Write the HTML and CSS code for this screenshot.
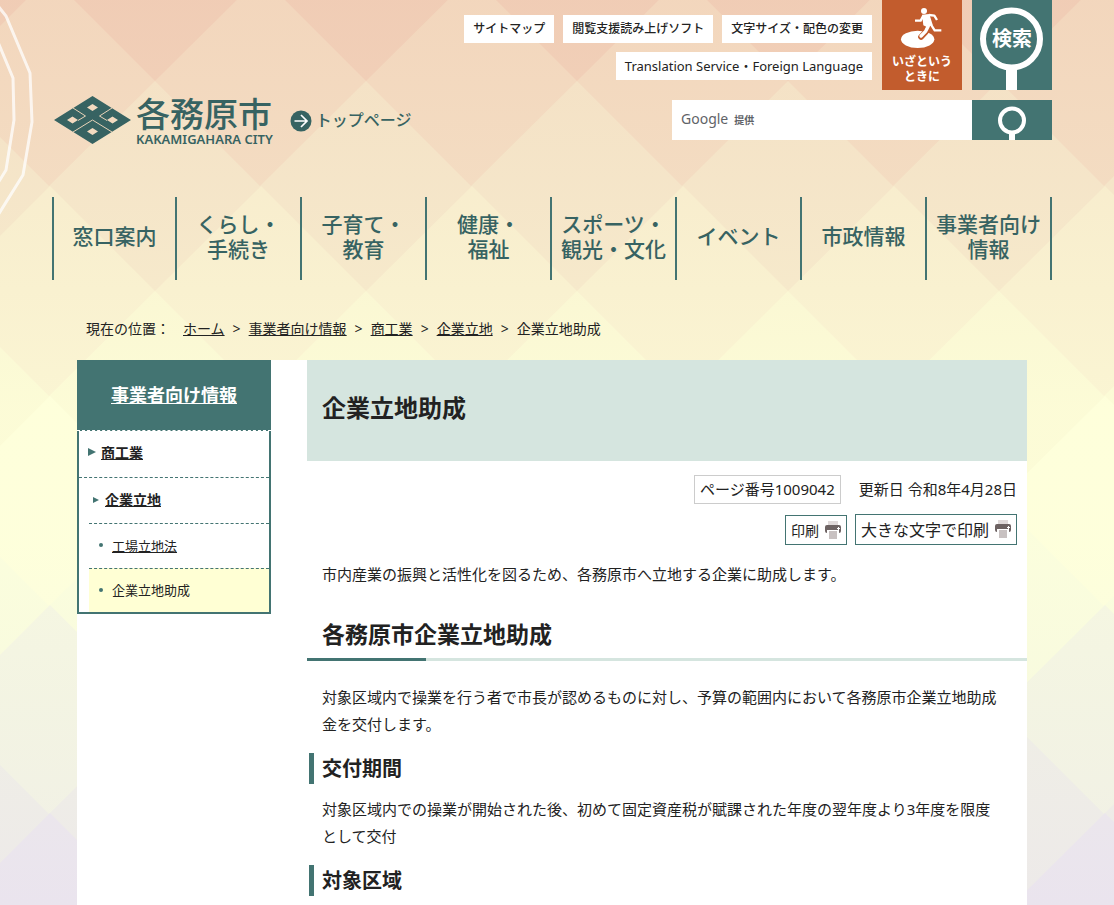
FILE: index.html
```html
<!DOCTYPE html>
<html lang="ja">
<head>
    <meta charset="UTF-8">
    <meta name="viewport" content="width=device-width, initial-scale=1.0">
    <title>企業立地助成｜各務原市公式ウェブサイト</title>
    <link rel="stylesheet" href="styles.css">
</head>
<body>
    <svg class="bg" aria-hidden="true">
        <defs>
            <path id="zigzag" d="M-161 106l106-106 105 105 106-105 105 105 106-105 105 105 106-105 105 105 106-105 105 105 106-105 105 105 106-105 105 105 106-105 105 105 106-105 105 105 106-105 105 105V1200H-161z"/>
            <linearGradient id="fade" gradientUnits="userSpaceOnUse" x1="0" y1="0" x2="0" y2="905">
                <stop offset="0" stop-color="#f1d0b8"/>
                <stop offset="0.2" stop-color="#f5e3c8"/>
                <stop offset="0.32" stop-color="#f9f1d0"/>
                <stop offset="0.45" stop-color="#feffda"/>
                <stop offset="0.6" stop-color="#fdffdc"/>
                <stop offset="0.8" stop-color="#f2f2e3"/>
                <stop offset="1" stop-color="#eae4ee"/>
            </linearGradient>
        </defs>
        <use href="#zigzag" x="105" y="-24" fill="#f3d9bf"/>
        <use href="#zigzag" x="-1" y="81" fill="#f5e6c9"/>
        <use href="#zigzag" x="105" y="186" fill="#f9f1d0"/>
        <use href="#zigzag" x="-1" y="291" fill="#fbfad5"/>
        <use href="#zigzag" x="105" y="396" fill="#feffdb"/>
        <use href="#zigzag" x="-1" y="501" fill="#fafddd"/>
        <use href="#zigzag" x="105" y="605" fill="#f3f4e3"/>
        <use href="#zigzag" x="-1" y="709" fill="#eeece7"/>
        <use href="#zigzag" x="105" y="813" fill="#eae4ee"/>
        <rect width="100%" height="100%" fill="url(#fade)" opacity="0.3"/>
        <g class="bg-line">
            <path d="M-2 6l8 10 24 57 2 49-9 53-25 40"/>
            <path d="M-2 42l15 36 1 42-8 50-8 13"/>
        </g>
    </svg>

    <div class="page">
        <header class="header">
            <div class="brand">
                <a class="logo" href="#">
                    <svg class="logo-mark" width="77" height="48" viewBox="0 0 77 48" aria-hidden="true">
                        <path fill="#376362" fill-rule="evenodd" d="M38.500 0L77 24 38.500 48 0 24zM38.500 8l-5.500 3.500 5.500 3.500 5.500-3.500zM18.500 20.500l-5.500 3.500 5.500 3.500 5.500-3.500zM58.500 20.500l-5.500 3.500 5.500 3.500 5.500-3.500zM38.500 32l-5.500 3.500 5.500 3.500 5.500-3.500z"/>
                        <path class="logo-line" d="M19 12l12.500 8-7.500 4.500M58 12l-12.500 8 7.500 4.500M19 36l19.500-12 19.500 12"/>
                    </svg>
                    <span class="logo-text">
                        <span class="logo-name">各務原市</span>
                        <span class="logo-roman">KAKAMIGAHARA CITY</span>
                    </span>
                </a>
                <a class="to-top" href="#">
                    <svg width="22" height="22" viewBox="0 0 22 22" aria-hidden="true">
                        <circle cx="11" cy="11" r="10.500" fill="#376362"/>
                        <path d="M4.500 11h12.500M11 5l6 6-6 6" fill="none" stroke="#fff" stroke-width="1.700"/>
                    </svg>
                    トップページ
                </a>
            </div>

            <div class="tools">
                <div class="tools-top">
                    <ul class="sub-links">
                        <li><a href="#">サイトマップ</a></li>
                        <li><a href="#">閲覧支援読み上げソフト</a></li>
                        <li><a href="#">文字サイズ・配色の変更</a></li>
                        <li class="lang"><a href="#">Translation Service・Foreign Language</a></li>
                    </ul>
                    <a class="tile tile-emergency" href="#">
                        <svg width="80" height="50" viewBox="0 0 240 150" aria-hidden="true">
                            <ellipse cx="107" cy="118" rx="50" ry="26" fill="#fff"/>
                            <path d="M139 80l-8 16-14 15" fill="none" stroke="#c25c2d" stroke-width="17" stroke-linecap="round"/>
                            <circle cx="126" cy="33" r="9" fill="#fff"/>
                            <path d="M120 44l22-2 10 32-16 8-12-6z" fill="#fff"/>
                            <path d="M124 47l-8 15h-17M141 45l16 2 8 13M147 74l11 17h20M139 76l-8 17-14 16" fill="none" stroke="#fff" stroke-width="7" stroke-linejoin="round"/>
                            <path d="M139 78l-8 16-14 14" fill="none" stroke="#fff" stroke-width="10" stroke-linecap="round"/>
                        </svg>
                        <span>いざという<br>ときに</span>
                    </a>
                    <a class="tile tile-search" href="#">
                        <svg class="lens" viewBox="0 0 80 90" aria-hidden="true">
                            <circle cx="39.500" cy="39" r="28.500" fill="none" stroke="#fff" stroke-width="6"/>
                            <path d="M34 68h11v22H34z" fill="#fff"/>
                        </svg>
                        <span>検索</span>
                    </a>
                </div>
                <form class="search">
                    <label for="q"><span class="google">Google</span> <span class="offer">提供</span></label>
                    <input type="text" id="q" name="q">
                    <button type="submit" aria-label="検索">
                        <svg width="80" height="40" viewBox="0 0 80 40" aria-hidden="true">
                            <circle cx="40" cy="20.500" r="12" fill="none" stroke="#fff" stroke-width="4"/>
                            <path d="M37 32h6v8h-6z" fill="#fff"/>
                        </svg>
                    </button>
                </form>
            </div>
        </header>

        <nav class="gnav">
            <a href="#">窓口案内</a>
            <a href="#">くらし・<br>手続き</a>
            <a href="#">子育て・<br>教育</a>
            <a href="#">健康・<br>福祉</a>
            <a href="#">スポーツ・<br>観光・文化</a>
            <a href="#">イベント</a>
            <a href="#">市政情報</a>
            <a href="#">事業者向け<br>情報</a>
        </nav>

        <div class="breadcrumb">
            <span class="here">現在の位置：</span>
            <a href="#">ホーム</a> <span>&gt;</span>
            <a href="#">事業者向け情報</a> <span>&gt;</span>
            <a href="#">商工業</a> <span>&gt;</span>
            <a href="#">企業立地</a> <span>&gt;</span>
            <span>企業立地助成</span>
        </div>

        <div class="main">
            <aside class="side">
                <h2 class="side-title"><a href="#">事業者向け情報</a></h2>
                <ul class="side-menu">
                    <li class="lv1"><a href="#">商工業</a></li>
                    <li class="lv2"><a href="#">企業立地</a></li>
                    <li class="lv3"><a href="#">工場立地法</a></li>
                    <li class="lv3 current">企業立地助成</li>
                </ul>
            </aside>

            <article class="content">
                <h1>企業立地助成</h1>
                <div class="meta">
                    <span class="page-id">ページ番号1009042</span>
                    <span>更新日 令和8年4月28日</span>
                </div>
                <div class="print">
                    <button type="button">印刷
                        <svg width="16" height="18" viewBox="0 0 16 18" aria-hidden="true">
                            <path d="M3 0h10v4H3z" fill="#e0dada"/>
                            <path d="M2 4h12a2 2 0 0 1 2 2v4a2 2 0 0 1-2 2V9H2v3a2 2 0 0 1-2-2V6a2 2 0 0 1 2-2z" fill="#6d6363"/>
                            <path d="M4 10h8v8H4z" fill="#c8c1c1"/>
                            <path d="M12 7.500h3M13.500 6v3" stroke="#fff"/>
                        </svg>
                    </button>
                    <button type="button" class="large">大きな文字で印刷
                        <svg width="16" height="18" viewBox="0 0 16 18" aria-hidden="true">
                            <path d="M3 0h10v4H3z" fill="#e0dada"/>
                            <path d="M2 4h12a2 2 0 0 1 2 2v4a2 2 0 0 1-2 2V9H2v3a2 2 0 0 1-2-2V6a2 2 0 0 1 2-2z" fill="#6d6363"/>
                            <path d="M4 10h8v8H4z" fill="#c8c1c1"/>
                            <path d="M12 7.500h3M13.500 6v3" stroke="#fff"/>
                        </svg>
                    </button>
                </div>
                <p>市内産業の振興と活性化を図るため、各務原市へ立地する企業に助成します。</p>
                <h2>各務原市企業立地助成</h2>
                <p>対象区域内で操業を行う者で市長が認めるものに対し、予算の範囲内において各務原市企業立地助成金を交付します。</p>
                <h3>交付期間</h3>
                <p>対象区域内での操業が開始された後、初めて固定資産税が賦課された年度の翌年度より3年度を限度として交付</p>
                <h3>対象区域</h3>
            </article>
        </div>
    </div>
</body>
</html>
```
FILE: styles.css
```css
* {
    box-sizing: border-box;
}

body {
    margin: 0;
    position: relative;
    background: #f0cbb4;
    font-family: "Noto Sans", "Noto Sans CJK JP", sans-serif;
    font-size: 15px;
    line-height: 27px;
    color: #222;
}

a {
    color: inherit;
}

ul {
    margin: 0;
    padding: 0;
    list-style: none;
}

.bg {
    position: absolute;
    top: 0;
    left: 0;
    width: 100%;
    height: 100%;
}

.bg-line {
    fill: none;
    stroke: #fff;
    stroke-width: 3;
    opacity: 0.75;
}

.page {
    position: relative;
    display: flex;
    flex-direction: column;
    min-height: 100vh;
    padding-right: 10px;
}

/* header */
.header {
    display: flex;
    justify-content: space-between;
    width: 100%;
    max-width: 1000px;
    min-height: 197px;
    margin: 0 auto;
}

.brand {
    display: flex;
    align-items: flex-start;
    gap: 17px;
    padding: 96px 0 0 2px;
    color: #376362;
}

.logo {
    display: flex;
    gap: 5px;
    text-decoration: none;
}

.logo-line {
    fill: none;
    stroke: #e8d3b8;
    stroke-width: 1;
}

.logo-text {
    display: flex;
    flex-direction: column;
}

.logo-name {
    font-size: 34px;
    font-weight: 500;
    line-height: 36px;
}

.logo-roman {
    font-size: 13px;
    font-weight: 600;
    line-height: 14px;
}

.to-top {
    display: flex;
    align-items: center;
    gap: 4px;
    padding-top: 11px;
    font-size: 16px;
    font-weight: 500;
    text-decoration: none;
}

.tools-top {
    display: flex;
    gap: 10px;
    margin-bottom: 10px;
}

.sub-links {
    display: flex;
    flex-wrap: wrap;
    justify-content: flex-end;
    align-content: flex-start;
    gap: 9px;
    width: 410px;
    padding-top: 15px;
}

.sub-links a {
    display: block;
    padding: 0 9px;
    background: #fff;
    font-size: 12px;
    font-weight: 500;
    line-height: 28px;
    text-decoration: none;
}

.sub-links .lang a {
    font-size: 13px;
    font-weight: 400;
}

.tile {
    position: relative;
    width: 80px;
    height: 90px;
    color: #fff;
    font-weight: 700;
    text-align: center;
    text-decoration: none;
}

.tile svg {
    display: block;
}

.tile-emergency {
    background: #c25c2d;
    font-size: 12px;
    line-height: 15px;
}

.tile-emergency span {
    display: block;
    padding-top: 4px;
}

.tile-search {
    background: #437472;
    font-size: 20px;
    line-height: 78px;
}

.tile-search .lens {
    position: absolute;
    inset: 0;
}

.search {
    display: flex;
    width: 380px;
    height: 40px;
    margin-left: auto;
    background: #fff;
}

.search label {
    padding: 0 9px;
    color: #5f6368;
    line-height: 36px;
}

.google {
    margin-right: 2px;
    font-size: 14px;
}

.offer {
    font-size: 10px;
    font-weight: 700;
}

.search input {
    flex: 1;
    min-width: 0;
    border: 0;
    background: none;
}

.search button {
    width: 80px;
    padding: 0;
    border: 0;
    background: #437472;
}

.search button svg {
    display: block;
}

/* global navigation */
.gnav {
    display: grid;
    grid-template-columns: 123fr repeat(7, 125fr);
    width: 100%;
    max-width: 1000px;
    margin: 0 auto;
    border-right: 2px solid #437472;
}

.gnav a {
    display: flex;
    align-items: center;
    justify-content: center;
    height: 83px;
    padding-bottom: 4px;
    border-left: 2px solid #437472;
    color: #376362;
    font-size: 21px;
    font-weight: 500;
    line-height: 25px;
    text-align: center;
    text-decoration: none;
}

/* breadcrumb */
.breadcrumb {
    display: flex;
    flex-wrap: wrap;
    gap: 8px;
    width: 100%;
    max-width: 950px;
    margin: 0 auto;
    padding: 35px 9px 18px;
    font-size: 14px;
}

.here {
    margin-right: 5px;
}

/* main */
.main {
    display: flex;
    flex: 1;
    gap: 36px;
    width: 100%;
    max-width: 950px;
    margin: 0 auto;
    background: #fff;
}

.side {
    flex: 0 0 194px;
}

.side-title {
    margin: 0;
    background: #437472;
    border-bottom: 1px dashed #fff;
    color: #fff;
    font-size: 18px;
    line-height: 70px;
    text-align: center;
}

.side-menu {
    border: 2px solid #437472;
    border-top: 0;
}

.side-menu li {
    position: relative;
    line-height: 44px;
}

.lv1 {
    padding: 0 0 2px 22px;
    border-bottom: 1px dashed #437472;
    font-size: 14px;
    font-weight: 700;
}

.lv2 {
    margin-left: 10px;
    padding: 0 0 1px 16px;
    font-size: 14px;
    font-weight: 700;
}

.lv3 {
    margin-left: 10px;
    padding-left: 23px;
    border-top: 1px dashed #437472;
    font-size: 13px;
}

.side-menu .current {
    background: #ffffd4;
    line-height: 43px;
}

.side-menu li::before {
    content: "";
    position: absolute;
    top: 17px;
    left: 9px;
    border-left: 8px solid #437472;
    border-top: 4px solid transparent;
    border-bottom: 4px solid transparent;
}

.side-menu .lv2::before {
    top: 19px;
    left: 4px;
    border-width: 3px 0 3px 6px;
}

.side-menu .lv3::before {
    top: 19px;
    left: 10px;
    width: 4px;
    height: 4px;
    border: 0;
    border-radius: 50%;
    background: #437472;
}

.content {
    flex: 1;
    min-width: 0;
}

.content h1 {
    margin: 0 0 14px;
    padding: 30px 15px 35px;
    background: #d5e5df;
    font-size: 24px;
    font-weight: 700;
    line-height: 36px;
}

.meta {
    display: flex;
    justify-content: flex-end;
    align-items: center;
    gap: 18px;
    margin-bottom: 10px;
    padding-right: 10px;
}

.page-id {
    padding: 0 5px;
    border: 1px solid #ccc;
}

.print {
    display: flex;
    justify-content: flex-end;
    align-items: flex-end;
    gap: 8px;
    margin-bottom: 16px;
    padding-right: 10px;
}

.print button {
    display: flex;
    align-items: center;
    gap: 6px;
    height: 30px;
    padding: 0 5px;
    border: 1px solid #437472;
    background: #fff;
    color: #222;
    font-family: inherit;
    font-size: 14px;
}

.print .large {
    height: 31px;
    padding-bottom: 2px;
    font-size: 16px;
}

.content p {
    margin: 0 0 15px;
    padding: 0 24px 0 15px;
}

.content h2 {
    margin: 0 0 23px;
    padding: 12px 15px 5px;
    border-bottom: 3px solid;
    border-image: linear-gradient(to right, #437472 120px, #d5e5df 120px) 1;
    font-size: 23px;
    font-weight: 700;
    line-height: 38px;
}

.content h3 {
    margin: 0 0 12px 2px;
    padding-left: 8px;
    border-left: 5px solid #437472;
    font-size: 20px;
    font-weight: 700;
    line-height: 31px;
}
```
